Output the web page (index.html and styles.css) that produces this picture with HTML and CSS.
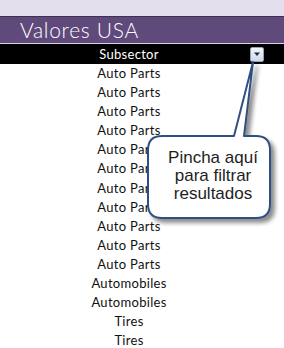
FILE: index.html
```html
<!DOCTYPE html>
<html lang="es">
<head>
  <meta charset="UTF-8">
  <meta name="viewport" content="width=device-width, initial-scale=1.0">
  <title>Valores USA</title>
  <link rel="stylesheet" href="styles.css">
</head>
<body>
  <div class="sheet">
    <div class="band"></div>
    <h1 class="title">Valores USA</h1>

    <div class="head-row">
      <span class="head-cell">Subsector</span>
      <button class="filter-btn" aria-label="Filtrar">
        <svg width="8" height="5" viewBox="0 0 8 5"><path d="M1 0.5h6L4 4z" fill="#1f2b3d"/></svg>
      </button>
    </div>

    <ul class="rows">
      <li>Auto Parts</li>
      <li>Auto Parts</li>
      <li>Auto Parts</li>
      <li>Auto Parts</li>
      <li>Auto Parts</li>
      <li>Auto Parts</li>
      <li>Auto Parts</li>
      <li>Auto Parts</li>
      <li>Auto Parts</li>
      <li>Auto Parts</li>
      <li>Auto Parts</li>
      <li>Automobiles</li>
      <li>Automobiles</li>
      <li>Tires</li>
      <li>Tires</li>
    </ul>

    <!-- bocadillo que apunta al botón de filtro -->
    <div class="callout">
      <svg class="callout-shape" width="140" height="170" viewBox="0 0 140 170">
        <defs>
          <filter id="sombra" x="-20%" y="-20%" width="140%" height="140%">
            <feGaussianBlur in="SourceAlpha" stdDeviation="2.2"/>
            <feOffset dx="4" dy="4"/>
            <feComponentTransfer><feFuncA type="linear" slope="0.45"/></feComponentTransfer>
            <feMerge><feMergeNode/><feMergeNode in="SourceGraphic"/></feMerge>
          </filter>
        </defs>
        <path filter="url(#sombra)"
              d="M17 75 H89 L108 1 L99 75 H111 Q125 75 125 89 V143 Q125 157 111 157 H17 Q3 157 3 143 V89 Q3 75 17 75 Z"
              fill="#fff" stroke="#2f5083" stroke-width="2" stroke-linejoin="round"/>
      </svg>
      <p class="callout-text">Pincha aquí<br>para filtrar<br>resultados</p>
    </div>
  </div>
</body>
</html>
```

FILE: styles.css
```css
body {
  margin: 0;
  background: #fff;
  font-family: 'Lato', 'Open Sans', sans-serif;
}

.sheet {
  position: relative;
  width: 284px;
  height: 348px;
  overflow: hidden;
}

.band {
  height: 16px;
  background: #e4dfec;
  border-bottom: 1px solid #3e3150;
}

.title {
  margin: 0;
  height: 26px;
  padding-left: 20px;
  background: #604a7b;
  border-bottom: 1px solid #d9d3e2;
  color: #fff;
  font-weight: 300;
  font-size: 21px;
  line-height: 26px;
  letter-spacing: 0.7px;
}

.head-row {
  display: flex;
  align-items: center;
  height: 20px;
  background: #000;
  position: relative;
}

.head-cell {
  width: 258px;
  text-align: center;
  color: #fff;
  font-size: 13px;
  letter-spacing: 0.3px;
}

.filter-btn {
  width: 14px;
  height: 15px;
  margin-left: -8px;
  padding: 0;
  border: 1px solid #8ea3bf;
  border-radius: 2px;
  background: linear-gradient(#f4f6fa, #cfd8e6);
  display: flex;
  align-items: center;
  justify-content: center;
}

.rows {
  list-style: none;
  margin: 0;
  padding: 0;
  width: 258px;
}

.rows li {
  height: 19.1px;
  line-height: 19px;
  text-align: center;
  font-size: 13px;
  color: #111;
  letter-spacing: 0.3px;
}

.callout {
  position: absolute;
  left: 145px;
  top: 61px;
}

.callout-shape {
  display: block;
}

.callout-text {
  position: absolute;
  left: 7px;
  top: 88px;
  width: 122px;
  margin: 0;
  text-align: center;
  font-family: 'Liberation Sans', Arial, sans-serif;
  font-size: 17px;
  line-height: 18px;
  color: #1e1e1e;
}
```
